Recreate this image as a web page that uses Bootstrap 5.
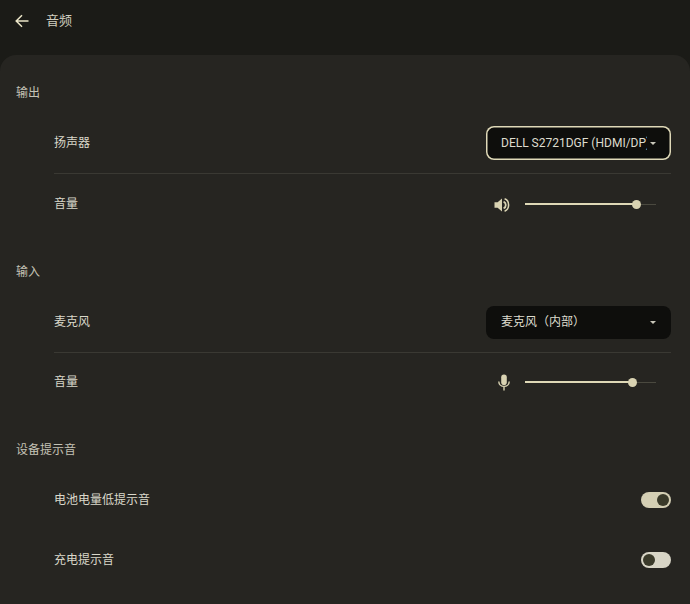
<!DOCTYPE html>
<html lang="zh">
<head>
<meta charset="utf-8">
<title>音频</title>
<link rel="stylesheet" href="https://cdn.jsdelivr.net/npm/bootstrap@5.3.0/dist/css/bootstrap.min.css">
<style>
html, body { height: 100%; }
body { background: #1b1b17; color: #dad8ca; font-family: Roboto, "Noto Sans CJK SC", sans-serif; font-size: 12px; overflow: hidden; }
.app-head { height: 55px; padding: 0 0 13px 15px; }
.app-title { font-size: 13px; margin-left: 17px; color: #cfcdbf; }
.panel-body { background: #262521; border-radius: 16px 16px 0 0; height: 549px; padding: 26px 19px 0 16px; }
.group-head { height: 24px; line-height: 24px; margin-bottom: 8px; color: #c4c2b5; }
.group-gap { margin-top: 26px; }
.group-gap-last { margin-top: 27px; }
.set-row { height: 60px; margin-left: 38px; }
.set-first { height: 61px; border-bottom: 1px solid #3a3933; }
.set-tight { height: 58px; }
.pick-box { width: 185px; height: 33px; background: #0e0e0c; border-radius: 8px; padding: 0 15px 0 15px; color: #dedcce; }
.pick-focus { height: 34px; box-shadow: 0 0 0 1.5px #dfd9b8 inset; }
.pick-text { width: 146px; overflow: hidden; white-space: nowrap; }
.pick-caret { width: 0; height: 0; border-left: 3.5px solid transparent; border-right: 3.5px solid transparent; border-top: 3.5px solid #c9c7ba; }
.vol-wrap { width: 177px; }
.vol-icon { width: 31px; }
.vol-nudge { padding-top: 2px; }
.vol-track { position: relative; width: 131px; height: 1px; background: #4a493f; margin-right: 15px; }
.vol-fill { position: absolute; left: 0; top: -1px; height: 2px; background: #ded8b6; }
.vol-thumb { position: absolute; top: -4px; width: 9px; height: 9px; margin-left: -4.5px; border-radius: 50%; background: #d9d3b2; }
.sw-track { position: relative; width: 30px; height: 16px; border-radius: 8px; background: #d4cfb4; }
.sw-knob { position: absolute; top: 2px; width: 12px; height: 12px; border-radius: 50%; background: #3a3a2a; }
.sw-on .sw-knob { right: 2px; }
.sw-off { background: #d8d5c6; }
.sw-off .sw-knob { left: 2px; }
</style>
</head>
<body>
<header class="app-head d-flex align-items-center">
  <svg width="14" height="14" viewBox="0 0 14 14" fill="none" stroke="#ece6c8" stroke-width="1.5" aria-hidden="true"><path d="M13.5 7H1.5M7 1.2 1.2 7 7 12.8"/></svg>
  <span class="app-title">音频</span>
</header>
<main class="panel-body">
  <section>
    <div class="group-head">输出</div>
    <div class="set-row set-first d-flex align-items-center justify-content-between">
      <span>扬声器</span>
      <div class="pick-box pick-focus d-flex align-items-center justify-content-between"><span class="pick-text">DELL S2721DGF (HDMI/DP)</span><span class="pick-caret"></span></div>
    </div>
    <div class="set-row d-flex align-items-center justify-content-between">
      <span>音量</span>
      <div class="vol-wrap d-flex align-items-center">
        <div class="vol-icon vol-nudge d-flex">
          <svg width="16" height="16" viewBox="0 0 16 16" aria-hidden="true"><path fill="#d9d3b2" d="M0.5 5.2H3.6L8 1.6V14.4L3.6 10.8H0.5Z"/><path d="M9.6 4.6C11 5.2 11.8 6.4 11.8 8S11 10.8 9.6 11.4" fill="none" stroke="#d9d3b2" stroke-width="1.8"/><path d="M10.6 1.8C13.2 2.8 14.6 5.2 14.6 8S13.2 13.2 10.6 14.2" fill="none" stroke="#d9d3b2" stroke-width="1.6"/></svg>
        </div>
        <div class="vol-track"><div class="vol-fill" style="width:111px"></div><div class="vol-thumb" style="left:111px"></div></div>
      </div>
    </div>
  </section>
  <section class="group-gap">
    <div class="group-head">输入</div>
    <div class="set-row set-first d-flex align-items-center justify-content-between">
      <span>麦克风</span>
      <div class="pick-box d-flex align-items-center justify-content-between"><span class="pick-text">麦克风（内部）</span><span class="pick-caret"></span></div>
    </div>
    <div class="set-row set-tight d-flex align-items-center justify-content-between">
      <span>音量</span>
      <div class="vol-wrap d-flex align-items-center">
        <div class="vol-icon d-flex ps-1">
          <svg width="12" height="17" viewBox="0 0 12 17" fill="none" stroke="#d9d3b2" stroke-width="1.4" aria-hidden="true"><rect x="3.2" y="0.5" width="5.6" height="10.5" rx="2.8" fill="#d9d3b2" stroke="none"/><path d="M0.8 7.5C0.8 10.4 3 12.4 6 12.4S11.2 10.4 11.2 7.5M6 12.4V16.6"/></svg>
        </div>
        <div class="vol-track"><div class="vol-fill" style="width:107px"></div><div class="vol-thumb" style="left:107px"></div></div>
      </div>
    </div>
  </section>
  <section class="group-gap-last">
    <div class="group-head">设备提示音</div>
    <div class="set-row d-flex align-items-center justify-content-between">
      <span>电池电量低提示音</span>
      <div class="sw-track sw-on"><span class="sw-knob"></span></div>
    </div>
    <div class="set-row d-flex align-items-center justify-content-between">
      <span>充电提示音</span>
      <div class="sw-track sw-off"><span class="sw-knob"></span></div>
    </div>
  </section>
</main>
<script src="https://cdn.jsdelivr.net/npm/bootstrap@5.3.0/dist/js/bootstrap.bundle.min.js"></script>
</body>
</html>
